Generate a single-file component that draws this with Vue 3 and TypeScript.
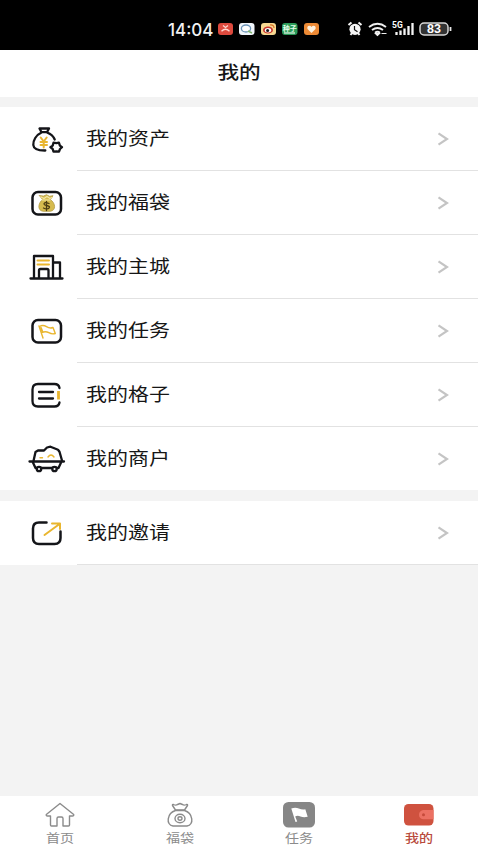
<script setup lang="ts">
import { ref } from 'vue'

interface MenuItem {
  icon: string
  label: string
}

const groups: MenuItem[][] = [
  [
    { icon: 'asset', label: '我的资产' },
    { icon: 'bag', label: '我的福袋' },
    { icon: 'city', label: '我的主城' },
    { icon: 'task', label: '我的任务' },
    { icon: 'grid', label: '我的格子' },
    { icon: 'shop', label: '我的商户' },
  ],
  [{ icon: 'invite', label: '我的邀请' }],
]

const tabs: MenuItem[] = [
  { icon: 'home', label: '首页' },
  { icon: 'lucky', label: '福袋' },
  { icon: 'flag', label: '任务' },
  { icon: 'mine', label: '我的' },
]

const active = ref('mine')
</script>

<template>
  <div class="screen">
    <div class="status">
      <span class="time">14:04</span>
      <svg class="apps" width="106" height="16" viewBox="0 0 106 16">
        <rect x="1" y="2" width="15" height="12" rx="3" fill="#dd4a3e" />
        <path d="M4.500 10.300q4-4 8 0M6 4.500l2.500 2 2.500-2" fill="none" stroke="#ffd9d2" stroke-width="1.300" />
        <rect x="22" y="2" width="15.500" height="12" rx="3" fill="#f1f6fb" />
        <ellipse cx="29" cy="7.500" rx="4.600" ry="3.500" fill="#fff" stroke="#6c94b7" stroke-width="1.300" />
        <path d="M31 10l4 2" stroke="#7fb36d" stroke-width="1.400" />
        <rect x="44" y="2" width="15" height="12" rx="3" fill="#f6d891" />
        <ellipse cx="51" cy="9" rx="5" ry="3.600" fill="#c8352b" />
        <ellipse cx="51" cy="9.300" rx="3.200" ry="2.200" fill="#fff" />
        <circle cx="50.600" cy="9.400" r="1.500" fill="#1d1512" />
        <path d="M53 4q4-.5 4 3" fill="none" stroke="#dc7527" stroke-width="1.200" />
        <rect x="65" y="2" width="15.500" height="12" rx="3" fill="#2b9a58" />
        <text x="72.700" y="9.800" text-anchor="middle" class="tiny">种子</text>
        <path d="M67 12h11" stroke="#d9f0df" stroke-width="1.300" />
        <rect x="87" y="2" width="15" height="12" rx="3" fill="#ed8a35" />
        <path d="M94.500 12L90.500 8q-.8-3 1.800-3.300 1.500 0 2.200 1.300.7-1.300 2.200-1.300 2.600.3 1.800 3.300z" fill="#fff2df" />
      </svg>
      <svg class="system" width="108" height="18" viewBox="0 0 108 18">
        <circle cx="8" cy="9.300" r="5.600" fill="#f4f4f4" />
        <path d="M1.500 5l3-2.600M14.500 5l-3-2.600M3.500 15l1.500-2M12.500 15l-1.500-2" stroke="#f4f4f4" stroke-width="2" />
        <path d="M7.500 6v3.800l3 2" fill="none" stroke="#111" stroke-width="1.200" />
        <path d="M22 7q8.500-6.500 17 0M25 10q5.500-4 11 0M28 12.700q2.500-1.800 5 0" fill="none" stroke="#efefef" stroke-width="1.900" />
        <path d="M30.500 15.500l-2-2h4zM34.500 13.500h5" fill="#efefef" stroke="#efefef" stroke-width="1.200" />
        <text x="45" y="8" class="net">5G</text>
        <path d="M49.500 15v-3M53.500 15v-4.500M57.500 15V8.500M61.500 15V6M65.500 15V3" stroke="#f4f4f4" stroke-width="2.300" />
        <rect x="73" y="3" width="28" height="12" rx="4" fill="#333" stroke="#d8d8d8" stroke-width="1.500" />
        <path d="M103.500 7v4" stroke="#e8e8e8" stroke-width="1.800" />
        <text x="87" y="13.400" text-anchor="middle" class="battery">83</text>
      </svg>
    </div>

    <header class="header"><h1>我的</h1></header>

    <main>
      <section v-for="(group, g) in groups" :key="g" class="group">
        <div v-for="item in group" :key="item.icon" class="row">
          <svg class="icon" width="48" height="40" viewBox="0 0 48 40">
            <template v-if="item.icon === 'asset'">
              <path d="M17.500 9.500h9.500l-2 3.700h-5.500zM19.500 13.500C14 16 11 21.500 11.300 26c.3 4.300 4 5.600 12 5.500M25 13.500c4 1.500 6.500 4 7.700 7" />
              <path d="M18.700 18.500l3 4 3-4M18.500 23h6.500M18.500 26h6.500M21.700 22v6.500" class="gold" />
              <path d="M28.400 28.200l2.300-1.600.8-2.900 2.900.4 2.500-.4 1 2.900 2.100 1.600-2 1.800-1 2.700-2.600-.4-2.900.4-.8-2.700z" />
            </template>
            <template v-else-if="item.icon === 'bag'">
              <rect x="10.500" y="9" width="28.500" height="22.500" rx="5.500" class="box" />
              <path d="M17.500 12.500l4 .6 3-1.400 3 1.600 3.500-.6-2.600 4c5 3 6.200 10.800-.2 11.600h-7c-6.300-.8-5-8.500-.8-11.600z" class="sack" />
              <path d="M19 14l3 1.500 3-2 3 2 2-1M20 17h8" class="shine" />
              <path d="M27 20.500q-4.500-2-5 .5c0 2 5.500 1 5.500 3.200-.5 2.400-4 2-6 .8M24.500 18.500v9" class="dollar" />
            </template>
            <template v-else-if="item.icon === 'city'">
              <path d="M8.500 31.500h32M12 31V9h19v22M31.500 15.500H38V31M17 31V23.500q0-1.500 1.500-1.500h6.500q1.500 0 1.500 1.500V31" />
              <path d="M15.500 13.500h11.500M15.500 17.500h11.500" class="gold" />
            </template>
            <template v-else-if="item.icon === 'task'">
              <rect x="10.500" y="9" width="28.500" height="22.500" rx="5.500" class="box" />
              <path d="M17 15l4 12M17.500 15.500q3.500-2 7 .2t6.500.8l2.300 6q-3.300 1-6.500-.8t-7.300 0" class="gold thin" />
              <path d="M19 17l1.500 4" class="gold" />
            </template>
            <template v-else-if="item.icon === 'grid'">
              <path d="M37.500 13c-.5-3-2-4-5-4H16c-4 0-5.500 1.500-5.500 5.500V26c0 4 1.500 5.500 5.500 5.500h16.500c3 0 4.500-1 5-4M17 17h14M17 23.500h14" />
              <path d="M36.500 16v8.500" class="gold thick" />
            </template>
            <template v-else-if="item.icon === 'shop'">
              <path d="M7.500 22.500h34.500M10.500 22.500l3 6.500h23l3-6.500M11.500 22l2-9 2.500-1.500h6l3-3 3.500-.8 7.500 3 1.500 2 2.500 8.800" />
              <circle cx="17" cy="30" r="2.200" fill="#fff" />
              <circle cx="32.500" cy="30" r="2.200" fill="#fff" />
              <path d="M26 18q3-4 6 0M18 18.700h2.500" class="gold thin" />
            </template>
            <template v-else>
              <path d="M24.500 9.500H17c-4.500 0-6 2-6 6V25c0 4 2 6 6 6h15.500c4 0 6-2 6-6v-6.500" class="box" />
              <path d="M22.500 22L37.500 11M30 10.500h8V16" class="gold" />
            </template>
          </svg>
          <div class="cell">
            <span class="label">{{ item.label }}</span>
            <svg class="chevron" width="12" height="14" viewBox="0 0 12 14"><path d="M1.500 1.300L10 7l-8.500 5.700" /></svg>
          </div>
        </div>
      </section>
    </main>

    <nav class="tabs">
      <button v-for="tab in tabs" :key="tab.icon" class="tab" :class="{ active: active === tab.icon }" @click="active = tab.icon">
        <svg width="34" height="26" viewBox="0 0 34 26">
          <path v-if="tab.icon === 'home'" class="line" d="M17 1.500L3.300 12.500q-.4 1.500 1.200 1.500H7.500v9q0 1 1 1h5.500v-7.500q0-1.500 1.500-1.500h3q1.500 0 1.500 1.500V24h5.500q1 0 1-1v-9H29.500q1.500 0 1.200-1.500z" />
          <g v-else-if="tab.icon === 'lucky'" class="line">
            <path d="M12.500 8L9.500 3.500q-.3-1.300 1-1 2.500 1.300 4 0l2.500-1 2.500 1q1.500 1.300 4 0 1.300-.3 1 1L21.500 8z" />
            <path d="M12.500 8.500C4 11 2.500 23 10 24h14c7.500-1 6-13-2.500-15.500z" />
            <ellipse cx="17" cy="16.500" rx="5" ry="4.300" />
            <ellipse cx="17" cy="16.500" rx="2" ry="1.700" />
          </g>
          <g v-else-if="tab.icon === 'flag'">
            <rect x="1" y="0" width="32" height="25.500" rx="5.500" fill="#868686" />
            <path d="M9.300 6.500q4-1.500 7.500 0t6.500.7l2.400 7.500q-4 1-7.200-.3t-5.300.2l2 5-1.700.4z" fill="#fff" />
          </g>
          <g v-else>
            <rect x="2" y="2" width="29.500" height="21.500" rx="4.500" fill="#cf523f" />
            <path d="M31.500 8H21q-4 1-4 4.700T21 17.300h10.500z" fill="#ec7163" />
            <circle cx="21.500" cy="12.700" r="1.500" fill="#c64b3b" />
          </g>
        </svg>
        <span>{{ tab.label }}</span>
      </button>
    </nav>
  </div>
</template>

<style>
body {
  margin: 0;
}
</style>

<style scoped>
.screen {
  display: flex;
  flex-direction: column;
  width: 478px;
  height: 850px;
  overflow: hidden;
  background: #f3f3f3;
  color: #161616;
  font-family: "Noto Sans CJK SC", sans-serif;
}
.status {
  display: flex;
  flex: none;
  align-items: center;
  box-sizing: border-box;
  height: 50px;
  padding: 8px 0 0 168px;
  background: #000;
}
.time {
  width: 49px;
  padding-top: 1px;
  color: #f2f2f2;
  font: 500 17px/20px Inter, sans-serif;
  white-space: nowrap;
}
.system {
  margin-left: 24px;
}
.tiny {
  fill: #e4ffe8;
  font-size: 7px;
  font-weight: 700;
}
.net {
  fill: #fff;
  font: 700 8.5px Roboto, sans-serif;
}
.battery {
  fill: #fff;
  font: 700 12.5px "Liberation Sans", sans-serif;
}
.header {
  display: flex;
  flex: none;
  align-items: center;
  justify-content: center;
  height: 47px;
  background: #fff;
}
h1 {
  margin: 0 0 5px;
  font-size: 18px;
  font-weight: 500;
  line-height: 24px;
  transform: scaleX(1.2);
}
main {
  flex: 1;
}
.group {
  margin-top: 10px;
  background: #fff;
}
.group + .group {
  margin-top: 11px;
}
.row {
  display: flex;
  align-items: center;
  height: 64px;
  padding-left: 22px;
}
.group:first-child .row:last-child {
  height: 63px;
}
.group:first-child .row:last-child .cell {
  height: 63px;
  border-bottom: 0;
}
.icon {
  flex: none;
  margin-right: 7px;
  fill: none;
  stroke: #141519;
  stroke-width: 2.3;
  stroke-linecap: round;
  stroke-linejoin: round;
}
.icon .box {
  stroke-width: 2.5;
}
.icon .gold {
  stroke: #e9b62f;
  stroke-width: 2;
}
.icon .thin {
  stroke-width: 1.4;
}
.icon .thick {
  stroke-width: 2.8;
  stroke-linecap: butt;
}
.icon .sack {
  fill: #d6bb4e;
  stroke: #b39b45;
  stroke-width: 0.8;
}
.icon .shine {
  stroke: #f5e9a8;
  stroke-width: 1.2;
}
.icon .dollar {
  stroke: #4b3c12;
  stroke-width: 1.3;
}
.cell {
  display: flex;
  flex: 1;
  align-items: center;
  justify-content: space-between;
  box-sizing: border-box;
  height: 64px;
  padding: 0 29px 0 9px;
  border-bottom: 1px solid #e2e2e2;
}
.label {
  margin-bottom: 3px;
  font-size: 17.8px;
  line-height: 26px;
  transform: scaleX(1.18);
  transform-origin: left;
}
.chevron {
  fill: none;
  stroke: #c4c4c4;
  stroke-width: 2.2;
}
.tabs {
  display: flex;
  flex: none;
  height: 54px;
  background: #fff;
}
.tab {
  display: flex;
  flex: 1;
  flex-direction: column;
  align-items: center;
  padding: 6px 0 0 1px;
  border: 0;
  background: none;
  color: #8b8b8b;
  font: 12px/18px "Noto Sans CJK SC", sans-serif;
}
.tab span {
  margin-top: 1px;
  transform: scaleX(1.17);
}
.active {
  color: #b94a3c;
  font-weight: 500;
}
.line {
  fill: none;
  stroke: #8b8b8b;
  stroke-width: 1.4;
  stroke-linejoin: round;
}
</style>
